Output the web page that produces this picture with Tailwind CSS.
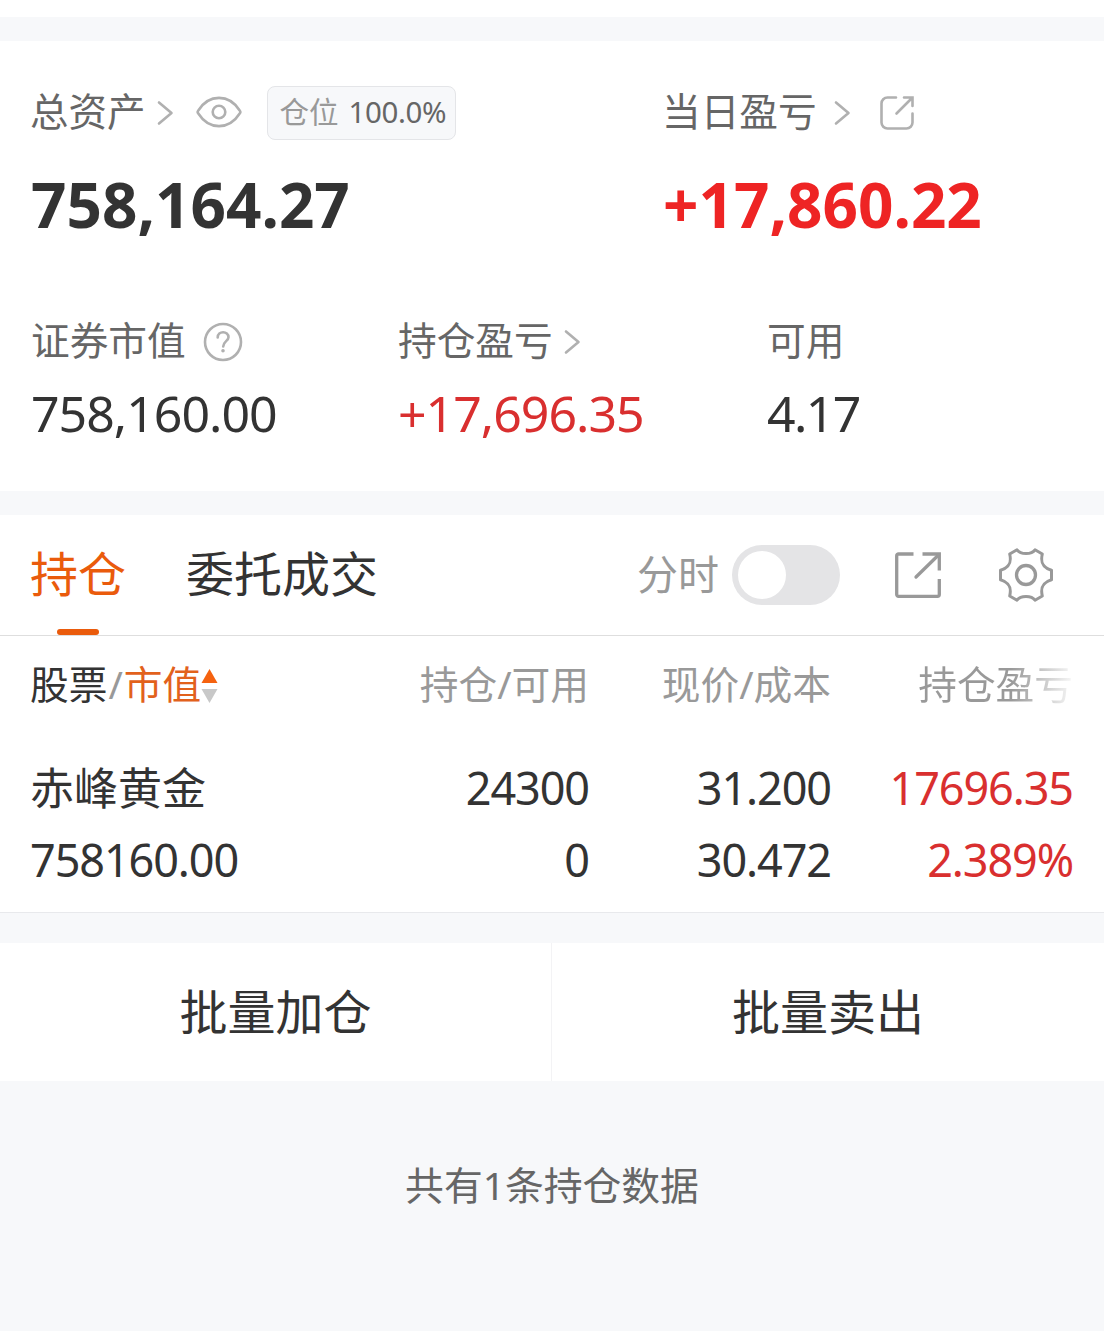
<!DOCTYPE html>
<html lang="zh-CN">
<head>
    <meta charset="UTF-8">
    <meta name="viewport" content="width=device-width, initial-scale=1.0">
    <title>持仓</title>
    <script src="https://cdn.jsdelivr.net/npm/@tailwindcss/browser@4"></script>
</head>
<body class="bg-[#f7f8fa] font-['Noto_Sans','Noto_Sans_CJK_SC',sans-serif] text-[#333] whitespace-nowrap">
    <div class="h-[17px] bg-white"></div>

    <!-- Account summary -->
    <section class="mt-6 h-[450px] bg-white pl-[31px] pt-[45px]">
        <div class="flex">
            <div class="w-[632px]">
                <div class="flex h-[54px] items-center text-[38.5px] leading-[54px] text-[#666]">
                    <span class="-mt-1 -ml-px">总资产</span>
                    <svg class="ml-[11px] w-[17px] h-[26px]" viewBox="0 0 17 26" fill="none" stroke="#b0b0b0" stroke-width="2.6" stroke-linecap="round" stroke-linejoin="round"><path d="M2 2.5 14.5 13 2 23.5"/></svg>
                    <svg class="ml-[22px] -mt-0.5 w-[46px] h-[32px]" viewBox="0 0 46 32" fill="none" stroke="#b0b0b0" stroke-width="2.6"><path d="M2.3 17.5Q1 16 2.3 14.5C13-2.3 33-2.3 43.7 14.5Q45 16 43.7 17.5C33 34.3 13 34.3 2.3 17.5Z"/><circle cx="23" cy="16" r="6.3"/></svg>
                    <div class="ml-[25px] flex h-[54px] w-[189px] items-center rounded-lg border border-[#e4e5e8] bg-[#f7f8fa] pl-[12px] text-[29.5px] leading-[50px]">
                        <span class="-mt-0.5 text-[#999]">仓位</span>
                        <span class="-mt-0.5 ml-[10px] tracking-[-0.4px]">100.0%</span>
                    </div>
                </div>
                <div class="mt-[34px] h-[60px] text-[62px] font-bold leading-[60px]">758,164.27</div>
            </div>
            <div>
                <div class="flex h-[54px] items-center text-[38.7px] leading-[54px] text-[#666]">
                    <span class="-mt-1 -ml-px">当日盈亏</span>
                    <svg class="ml-[17px] w-[17px] h-[26px]" viewBox="0 0 17 26" fill="none" stroke="#b0b0b0" stroke-width="2.6" stroke-linecap="round" stroke-linejoin="round"><path d="M2 2.5 14.5 13 2 23.5"/></svg>
                    <svg class="ml-[28px] w-[36px] h-[36px]" viewBox="0 0 36 36" fill="none" stroke="#b0b0b0" stroke-width="2.6" stroke-linecap="round"><path d="M17 2.5H8.5a6 6 0 0 0-6 6v19a6 6 0 0 0 6 6h19a6 6 0 0 0 6-6V18.5M25 2.5h8.5V11M33 3 17.5 18.5"/></svg>
                </div>
                <div class="mt-[34px] h-[60px] text-[62px] font-bold leading-[60px] text-[#ee2424]">+17,860.22</div>
            </div>
        </div>

        <div class="mt-[83px] grid grid-cols-[367px_369px_auto]">
            <div>
                <div class="flex h-[46px] items-center text-[38.7px] leading-[46px] text-[#666]">
                    <span>证券市值</span>
                    <svg class="ml-[17px] mt-1 w-[40px] h-[40px]" viewBox="0 0 40 40" fill="none" stroke="#b0b0b0" stroke-width="2.6" stroke-linecap="round"><circle cx="20" cy="20" r="18"/><path d="M14.7 15.5C14.7 8.5 25.5 8.5 25.5 15.2C25.5 19 20.2 19.5 20.2 24.5"/><circle cx="20" cy="28.8" r="1" fill="#b0b0b0" stroke-width="1.6"/></svg>
                </div>
                <div class="mt-[20px] text-[50px] leading-[60px] tracking-[-1px]">758,160.00</div>
            </div>
            <div>
                <div class="flex h-[46px] items-center text-[38.7px] leading-[46px] text-[#666]">
                    <span>持仓盈亏</span>
                    <svg class="ml-[11px] mt-1 w-[17px] h-[26px]" viewBox="0 0 17 26" fill="none" stroke="#b0b0b0" stroke-width="2.6" stroke-linecap="round" stroke-linejoin="round"><path d="M2 2.5 14.5 13 2 23.5"/></svg>
                </div>
                <div class="mt-[20px] text-[50px] leading-[60px] tracking-[-1px] text-[#d92f2f]">+17,696.35</div>
            </div>
            <div>
                <div class="h-[46px] text-[38.7px] leading-[46px] text-[#666]">可用</div>
                <div class="mt-[20px] text-[50px] leading-[60px] tracking-[-1.6px]">4.17</div>
            </div>
        </div>
    </section>

    <!-- Holdings -->
    <section class="mt-6 h-[398px] border-b border-[#e8e9ec] bg-white">
        <div class="flex h-[121px] items-center border-b border-[#dedede] pl-[30px] text-[48px]">
            <div class="relative flex h-full items-center text-[#ea5b0c]">
                <span class="-mt-0.5">持仓</span>
                <span class="absolute bottom-0 left-[27px] h-[6px] w-[42px] rounded-full bg-[#ea5b0c]"></span>
            </div>
            <div class="-mt-0.5 ml-[60px]">委托成交</div>
            <div class="ml-[259px] text-[41px] text-[#999]">分时</div>
            <div class="ml-[13px] h-[60px] w-[108px] rounded-full bg-[#e4e4e6] p-[6px]">
                <div class="size-12 rounded-full bg-white"></div>
            </div>
            <svg class="ml-[54px] w-[50px] h-[50px]" viewBox="0 0 50 50" fill="none" stroke="#999" stroke-width="3.3" stroke-linejoin="round"><path d="M19.5 4H4.5a1.8 1.8 0 0 0-1.8 1.8V44.5a1.8 1.8 0 0 0 1.8 1.8H43.5a1.8 1.8 0 0 0 1.8-1.8V29"/><path d="M28.5 4H45.3V20.5" stroke-linejoin="miter"/><path d="M44.5 5 22 27" stroke-linecap="round"/></svg>
            <svg class="ml-[54px] w-[56px] h-[56px]" viewBox="0 0 56 56" fill="none" stroke="#999" stroke-width="3" stroke-linejoin="round"><path d="M19 2.8C22.5 7.8 33.5 7.8 37 2.8L44.3 7C42.3 15.5 44.5 20.5 53.5 23.3V32.7C44.5 35.5 42.3 40.5 44.3 49L37 53.2C33.5 48.2 22.5 48.2 19 53.2L11.7 49C13.7 40.5 11.5 35.5 2.5 32.7V23.3C11.5 20.5 13.7 15.5 11.7 7Z"/><circle cx="28" cy="28" r="9.5" stroke-width="3.3"/></svg>
        </div>

        <div class="grid h-[96px] grid-cols-[290px_269px_242px_242px] items-center pl-[30px] text-right text-[38.7px] text-[#999]">
            <div class="flex items-center text-left">
                <span class="text-[#333]">股票</span><span class="px-px">/</span><span class="text-[#e2611c]">市值</span>
                <svg class="mt-[5px] w-[17px] h-[36px]" viewBox="0 0 17 36"><path d="M8.5 1 16.5 15H.5Z" fill="#f5620f"/><path d="M.5 21h16L8.5 35Z" fill="#c8c8c8"/></svg>
            </div>
            <div>持仓/可用</div>
            <div>现价/成本</div>
            <div><span class="bg-linear-to-r from-[#999] from-60% to-[#f8f8f8] bg-clip-text text-transparent">持仓盈亏</span></div>
        </div>

        <div class="grid grid-cols-[290px_269px_242px_242px] pt-[20px] pl-[30px] text-right text-[45px] leading-[72px] tracking-[-1.1px]">
            <div class="text-left text-[44px] tracking-normal">赤峰黄金</div>
            <div>24300</div>
            <div>31.200</div>
            <div class="text-[#d92f2f]">17696.35</div>
            <div class="text-left">758160.00</div>
            <div>0</div>
            <div>30.472</div>
            <div class="text-[#d92f2f]">2.389%</div>
        </div>
    </section>

    <!-- Batch actions -->
    <div class="mt-[30px] grid h-[138px] grid-cols-2 bg-white text-center text-[48px] leading-[138px]">
        <div class="border-r border-[#f3f3f5]">批量加仓</div>
        <div>批量卖出</div>
    </div>

    <p class="mt-[74px] text-center text-[38.8px] leading-[60px] text-[#666]">共有1条持仓数据</p>
</body>
</html>
